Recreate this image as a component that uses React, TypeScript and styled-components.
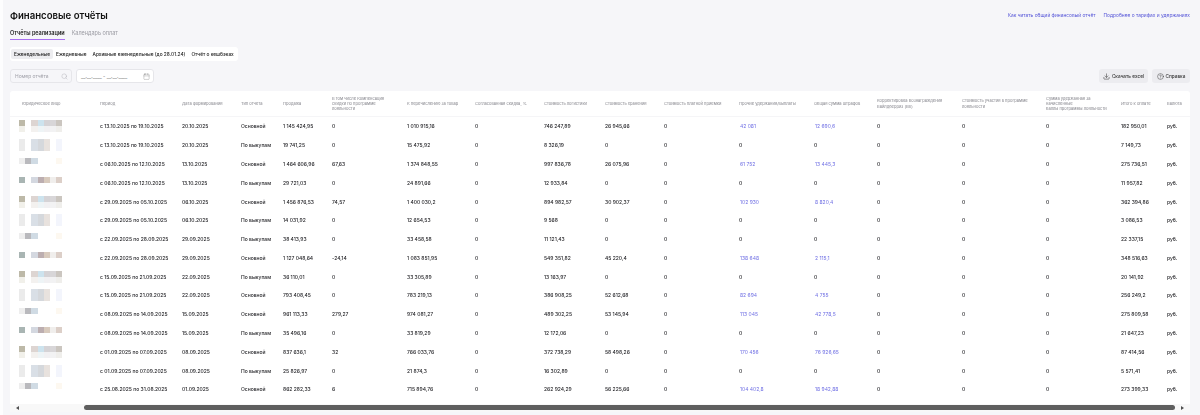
import React from "react";
import styled, {createGlobalStyle} from "styled-components";
import {Calendar, CircleHelp, Download, Search} from "lucide-react";

const GlobalStyle = createGlobalStyle`
    html, body {margin: 0; padding: 0; background: #f6f6f9; overflow: hidden;}
    body {font-family: Inter, "Noto Sans", sans-serif; color: #222;}
`

const widths = [90, 82, 59, 42, 49, 75, 68, 69, 61, 59, 75, 75, 63, 85, 84, 75, 46, 23]

const headers = [
    "Юридическое лицо", "Период", "Дата формирования", "Тип отчета", "Продажа",
    "В том числе Компенсация\nскидки по программе\nлояльности",
    "К перечислению за товар", "Согласованная скидка, %", "Стоимость логистики",
    "Стоимость хранения", "Стоимость платной приемки", "Прочие удержания/выплаты",
    "Общая сумма штрафов", "Корректировка Вознаграждения\nВайлдберриз (ВВ)",
    "Стоимость участия в программе\nлояльности",
    "Сумма удержанная за\nначисленные\nбаллы программы лояльности",
    "Итого к оплате", "Валюта",
]

const A = [["#bdb9a8", "", "#ddd5d2", "#cde3ee", "#d5d3d6", "#d8d6d8", "#cbc6c0"], ["#f1f0ea", "", "#f3f1ef", "#eef4f6", "#f1f0f2", "#f2f2f3", "#efeeeb"]]
const B = [["#ebebeb", "", "#d9dfe6", "#d5d8dc", "#e8e2de", "", "#f3f5fc"], ["#ebebeb", "", "#d9dfe6", "#d5d8dc", "#e8e2de", "", "#f3f5fc"]]
const C = [["#eeeeee", "#b9b9bd", "#d0dbe4", "", "", "", "#fdf8f0"], ["", "", "", "", "", "", ""]]
const D = [["#a9b5b3", "", "#d4d8e0", "#bcaeb0", "#d8cabd", "#f0eeec", "#dccfc8"], ["", "", "", "", "", "", ""]]
const mosaics = [A, B, C, D]

// link: 42 081 и т.п. показываем синим, 0 обычным текстом
const rows: string[][] = [
    ["с 13.10.2025 по 19.10.2025", "20.10.2025", "Основной", "1 145 424,95", "0", "1 010 915,16", "0", "746 247,89", "26 945,66", "0", "42 081", "12 690,6", "0", "0", "0", "182 950,01"],
    ["с 13.10.2025 по 19.10.2025", "20.10.2025", "По выкупам", "19 741,25", "0", "15 475,92", "0", "8 326,19", "0", "0", "0", "0", "0", "0", "0", "7 149,73"],
    ["с 06.10.2025 по 12.10.2025", "13.10.2025", "Основной", "1 464 606,96", "67,63", "1 374 848,55", "0", "997 836,78", "26 075,96", "0", "61 752", "13 445,3", "0", "0", "0", "275 736,51"],
    ["с 06.10.2025 по 12.10.2025", "13.10.2025", "По выкупам", "29 721,03", "0", "24 891,66", "0", "12 933,84", "0", "0", "0", "0", "0", "0", "0", "11 957,82"],
    ["с 29.09.2025 по 05.10.2025", "06.10.2025", "Основной", "1 456 876,53", "74,57", "1 400 030,2", "0", "894 982,57", "30 902,37", "0", "102 930", "8 820,4", "0", "0", "0", "362 394,86"],
    ["с 29.09.2025 по 05.10.2025", "06.10.2025", "По выкупам", "14 031,92", "0", "12 654,53", "0", "9 568", "0", "0", "0", "0", "0", "0", "0", "3 086,53"],
    ["с 22.09.2025 по 28.09.2025", "29.09.2025", "По выкупам", "38 413,93", "0", "33 458,58", "0", "11 121,43", "0", "0", "0", "0", "0", "0", "0", "22 337,15"],
    ["с 22.09.2025 по 28.09.2025", "29.09.2025", "Основной", "1 127 048,64", "-24,14", "1 083 851,95", "0", "549 351,82", "45 220,4", "0", "138 648", "2 115,1", "0", "0", "0", "348 516,63"],
    ["с 15.09.2025 по 21.09.2025", "22.09.2025", "По выкупам", "36 110,01", "0", "33 305,89", "0", "13 163,97", "0", "0", "0", "0", "0", "0", "0", "20 141,92"],
    ["с 15.09.2025 по 21.09.2025", "22.09.2025", "Основной", "793 408,45", "0", "783 219,13", "0", "386 908,25", "52 612,68", "0", "82 694", "4 755", "0", "0", "0", "256 249,2"],
    ["с 08.09.2025 по 14.09.2025", "15.09.2025", "Основной", "961 113,33", "279,27", "974 081,27", "0", "489 302,25", "53 145,94", "0", "113 045", "42 778,5", "0", "0", "0", "275 809,58"],
    ["с 08.09.2025 по 14.09.2025", "15.09.2025", "По выкупам", "35 496,16", "0", "33 819,29", "0", "12 172,06", "0", "0", "0", "0", "0", "0", "0", "21 647,23"],
    ["с 01.09.2025 по 07.09.2025", "08.09.2025", "Основной", "837 636,1", "32", "766 033,76", "0", "372 738,29", "58 498,26", "0", "170 456", "76 926,65", "0", "0", "0", "87 414,56"],
    ["с 01.09.2025 по 07.09.2025", "08.09.2025", "По выкупам", "25 826,97", "0", "21 874,3", "0", "16 302,89", "0", "0", "0", "0", "0", "0", "0", "5 571,41"],
    ["с 25.08.2025 по 31.08.2025", "01.09.2025", "Основной", "862 282,33", "6", "715 894,76", "0", "262 924,29", "56 225,66", "0", "104 402,8", "18 942,88", "0", "0", "0", "273 399,33"],
]

export default function App() {
    return (
        <Page>
            <GlobalStyle/>
            <TopRow>
                <Title>Финансовые отчёты</Title>
                <TopLinks>
                    <TopLink>Как читать общий финансовый отчёт</TopLink>
                    <TopLink>Подробнее о тарифах и удержаниях</TopLink>
                </TopLinks>
            </TopRow>
            <Tabs>
                <Tab $active>Отчёты реализации</Tab>
                <Tab>Календарь оплат</Tab>
            </Tabs>
            <Pills>
                <Pill $active>Еженедельные</Pill>
                <Pill>Ежедневные</Pill>
                <Pill>Архивные еженедельные (до 28.01.24)</Pill>
                <Pill>Отчёт о кешбэках</Pill>
            </Pills>
            <FilterRow>
                <NumberField>
                    <span>Номер отчёта</span>
                    <Search size={7} strokeWidth={1.2}/>
                </NumberField>
                <DateField>
                    <span>__.__.____ - __.__.____</span>
                    <Calendar size={7} strokeWidth={1}/>
                </DateField>
                <Actions>
                    <ActionButton $wide><Download size={7} strokeWidth={1.8}/>Скачать excel</ActionButton>
                    <ActionButton><CircleHelp size={7} strokeWidth={1.6}/>Справка</ActionButton>
                </Actions>
            </FilterRow>
            <Card>
                <Table>
                    <colgroup>
                        {widths.map((w, i) => <col key={i} width={w}/>)}
                    </colgroup>
                    <thead>
                    <tr>
                        {headers.map((h, i) => <Th key={i} $first={i === 0}>{h}</Th>)}
                    </tr>
                    </thead>
                    <tbody>
                    {rows.map((row, r) => (
                        <tr key={r}>
                            <Td>
                                <Mosaic>
                                    {mosaics[r % 4].flat().map((c, i) => <MosaicCell key={i} $color={c}/>)}
                                </Mosaic>
                            </Td>
                            {row.map((v, i) => (
                                <Td key={i}>
                                    {(i === 10 || i === 11) && v !== "0" ? <CellLink>{v}</CellLink> : v}
                                </Td>
                            ))}
                            <Td>руб.</Td>
                        </tr>
                    ))}
                    </tbody>
                </Table>
                <ScrollBar>
                    <Arrow $left/>
                    <Thumb/>
                    <Arrow/>
                </ScrollBar>
            </Card>
        </Page>
    )
}

const Page = styled.div`
    width: 1200px;
    height: 415px;
    box-sizing: border-box;
    border-left: 3px solid #fdfdfe;
    padding: 0 10px 0 7px;
    overflow: hidden;
    filter: blur(0.28px);
`
const TopRow = styled.div`
    display: flex;
    justify-content: space-between;
    align-items: center;
    height: 30px;
`
const Title = styled.h1`
    margin: 0;
    font-size: 9.6px;
    font-weight: 600;
    color: #111;
`
const TopLinks = styled.div`
    display: flex;
    gap: 8px;
`
const TopLink = styled.a`
    font-size: 4.85px;
    color: #5555d8;
`
const Tabs = styled.div`
    display: flex;
    gap: 7px;
    height: 10px;
    align-items: flex-start;
`
const Tab = styled.div<{$active?: boolean}>`
    font-size: 5.5px;
    line-height: 7px;
    height: 10px;
    box-sizing: border-box;
    font-weight: ${p => p.$active ? 600 : 400};
    color: ${p => p.$active ? "#222" : "#9a9aa2"};
    border-bottom: 1px solid ${p => p.$active ? "#a86ff0" : "transparent"};
`
const Pills = styled.div`
    display: inline-flex;
    align-items: center;
    margin-top: 7px;
    height: 14px;
    padding: 0 1px;
    background: #fff;
    border-radius: 3px;
    vertical-align: top;
`
const Pill = styled.div<{$active?: boolean}>`
    font-size: 4.8px;
    font-weight: 500;
    color: #222;
    padding: 0 3px;
    height: 10px;
    line-height: 10px;
    border-radius: 2px;
    background: ${p => p.$active ? "#ededf0" : "transparent"};
`
const FilterRow = styled.div`
    display: flex;
    align-items: center;
    gap: 4px;
    margin-top: 8px;
    height: 14px;
`
const NumberField = styled.div`
    width: 62px;
    height: 14px;
    box-sizing: border-box;
    display: flex;
    align-items: center;
    justify-content: space-between;
    padding: 0 3px 0 4px;
    border: 1px solid #e6e6ea;
    border-radius: 3px;
    font-size: 4.9px;
    color: #a0a0a8;
`
const DateField = styled(NumberField)`
    width: 78px;
    background: #fff;
    color: #666;
`
const Actions = styled.div`
    margin-left: auto;
    display: flex;
    gap: 4px;
`
const ActionButton = styled.div<{$wide?: boolean}>`
    width: ${p => p.$wide ? 49 : 38}px;
    height: 14px;
    display: flex;
    align-items: center;
    justify-content: center;
    gap: 2px;
    background: #ececf0;
    border-radius: 3px;
    font-size: 4.7px;
    font-weight: 500;
    color: #333;
`
const Card = styled.div`
    margin-top: 8px;
    background: #fff;
    border-radius: 3px 3px 0 0;
    overflow: hidden;
`
const Table = styled.table`
    width: 1180px;
    table-layout: fixed;
    border-collapse: collapse;
`
const Th = styled.th<{$first?: boolean}>`
    height: 25px;
    padding: 0 0 0 ${p => p.$first ? 12 : 0}px;
    font-size: 4.05px;
    line-height: 5.3px;
    font-weight: 400;
    text-align: left;
    white-space: pre-line;
    color: #85858c;
    border-bottom: 1px solid #f5f5f7;
`
const Td = styled.td`
    height: 18.79px;
    padding: 0;
    font-size: 5px;
    font-weight: 500;
    color: #26262a;
    white-space: nowrap;
`
const CellLink = styled.a`
    display: inline-block;
    margin: -1px 0 0 1px;
    color: #7070e4;
    font-weight: 400;
`
const Mosaic = styled.div`
    display: grid;
    grid-template-columns: repeat(7, 6.2px);
    grid-auto-rows: 6px;
    margin-left: 9px;
`
const MosaicCell = styled.div<{$color: string}>`
    background: ${p => p.$color || "transparent"};
`
const ScrollBar = styled.div`
    margin-top: 5px;
    height: 8px;
    display: flex;
    align-items: center;
    background: #f8f8f8;
    padding: 0 6px;
`
const Arrow = styled.div<{$left?: boolean}>`
    width: 0;
    height: 0;
    margin: ${p => p.$left ? "0 65px 0 0" : "0 0 0 6px"};
    border-top: 2.5px solid transparent;
    border-bottom: 2.5px solid transparent;
    ${p => p.$left ? "border-right: 3px solid #505050;" : "border-left: 3px solid #505050;"}
`
const Thumb = styled.div`
    flex: 1;
    height: 5px;
    border-radius: 3px;
    background: #5f5f5f;
`
